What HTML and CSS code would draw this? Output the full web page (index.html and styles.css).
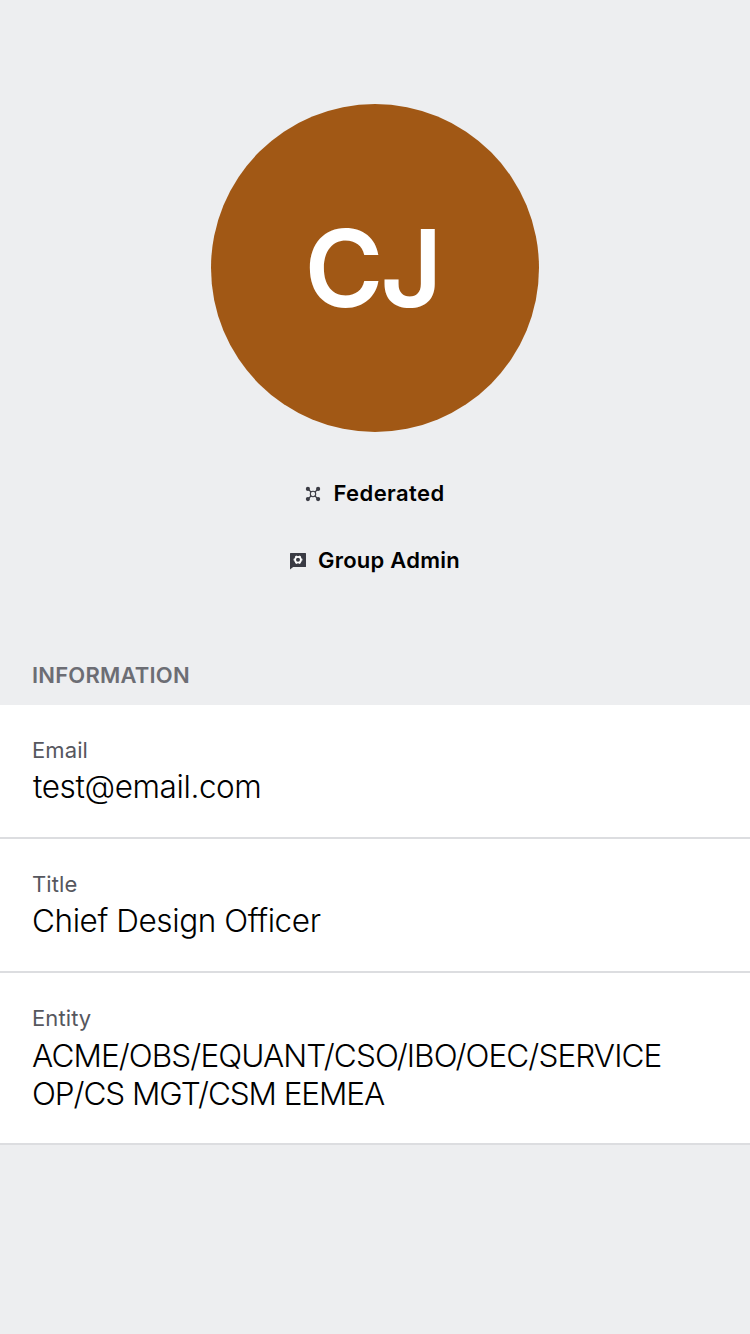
FILE: index.html
```html
<!DOCTYPE html>
<html lang="en">
<head>
<meta charset="utf-8">
<title>Profile</title>
<link rel="stylesheet" href="styles.css">
</head>
<body>
<main class="profile">
  <header class="hero">
    <div class="avatar"><span class="initials">CJ</span></div>
    <div class="badge federated">
      <svg class="icon icon-federated" viewBox="0 0 16 16"><g stroke="#3a3b44" stroke-width="1.1" fill="none"><path d="M2.500 2.500 6 6M13.500 2.500 10 6M2.500 13.500 6 10M13.500 13.500 10 10"/><circle cx="8" cy="8" r="2.700"/></g><g fill="#3a3b44"><circle cx="2.900" cy="2.900" r="2.100"/><circle cx="13.100" cy="2.900" r="2.100"/><circle cx="2.900" cy="13.100" r="2.100"/><circle cx="13.100" cy="13.100" r="2.100"/></g></svg>
      <span class="badge-text">Federated</span>
    </div>
    <div class="badge admin">
      <svg class="icon icon-admin" viewBox="0 0 16 16"><path fill="#3a3b44" d="M.6 0H15.400q.6 0 .6.600V13.400q0 .6-.6.600H3.200L0 16.500V.600Q0 0 .6 0z"/><g stroke="#fff" fill="none"><path stroke-width="1.800" d="M3.600 6.700h1.200M11.200 6.700h1.200M5.800 2.890l.6 1.040M9.600 9.470l.6 1.040M10.200 2.890l-.6 1.040M6.400 9.470l-.6 1.040"/><circle cx="8" cy="6.700" r="2.900" stroke-width="1.800"/></g></svg>
      <span class="badge-text">Group Admin</span>
    </div>
  </header>
  <h2 class="section-title"><span>INFORMATION</span></h2>
  <section class="list">
    <div class="row"><span class="label">Email</span><span class="value email">test@email.com</span></div>
    <div class="row"><span class="label">Title</span><span class="value title">Chief Design Officer</span></div>
    <div class="row row-tall"><span class="label">Entity</span><span class="value entity">ACME/OBS/EQUANT/CSO/IBO/OEC/SERVICE</span><span class="value entity-end">OP/CS MGT/CSM EEMEA</span></div>
  </section>
</main>
</body>
</html>
```
FILE: styles.css
```css
* { box-sizing: border-box; }
body { margin: 0; background: #edeef0; font-family: Inter, "Liberation Sans", sans-serif; color: #000; }
.profile { min-height: 1334px; }
.hero { height: 646px; padding-top: 104px; display: flex; flex-direction: column; align-items: center; }
.avatar { width: 328px; height: 328px; border-radius: 50%; background: #a15815; color: #fff; display: flex; align-items: center; justify-content: center; }
.initials { font-size: 107px; font-weight: 600; line-height: 1; letter-spacing: -3px; padding: 1px 6px 0 0; }
.badge { display: flex; align-items: center; height: 30px; font-size: 22px; font-weight: 600; }
.federated { margin-top: 46px; letter-spacing: 0.4px; }
.admin { margin-top: 37px; letter-spacing: 0.25px; }
.icon { width: 16px; height: 16px; margin-right: 12px; overflow: visible; }
.icon-federated { margin-top: 2px; }
.icon-admin { margin: 1px 12px 0 0; }
.section-title { margin: 0; height: 59px; padding: 0 0 2px 32px; display: flex; align-items: center; font-size: 22px; font-weight: 600; letter-spacing: 0.2px; color: #6c6d74; }
.list { background: #fff; }
.row { height: 134px; padding: 30px 32px 0; border-bottom: 2px solid #dcdde0; display: flex; flex-direction: column; align-items: flex-start; }
.row-tall { height: 172px; }
.label { font-size: 22px; line-height: 30px; color: #56575e; letter-spacing: 0.1px; }
.value { font-size: 31.5px; line-height: 38px; margin-top: 3px; font-weight: 300; white-space: nowrap; }
.email { letter-spacing: -0.4px; padding-left: 1px; }
.title { letter-spacing: -0.42px; }
.entity { letter-spacing: -0.9px; margin-top: 4px; }
.entity-end { letter-spacing: -1.07px; margin-top: 0; }
```
